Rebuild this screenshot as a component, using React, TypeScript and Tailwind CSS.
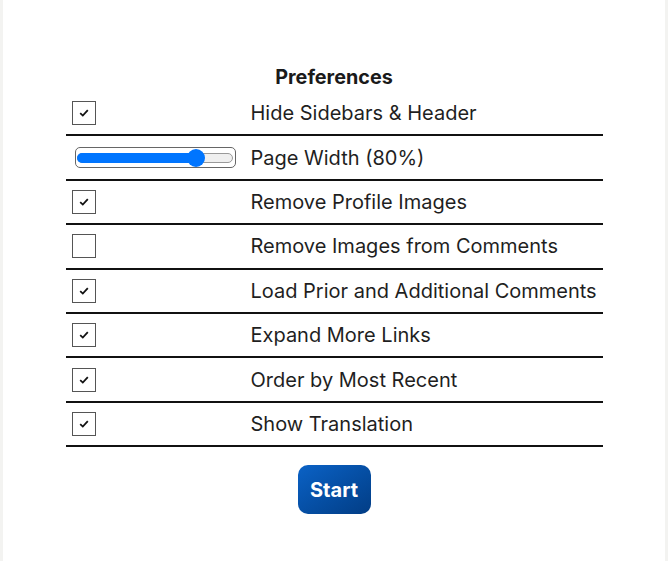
import React from "react";

const rows: { label: string; kind: "check" | "uncheck" | "slider" }[] = [
  { label: "Hide Sidebars & Header", kind: "check" },
  { label: "Page Width (80%)", kind: "slider" },
  { label: "Remove Profile Images", kind: "check" },
  { label: "Remove Images from Comments", kind: "uncheck" },
  { label: "Load Prior and Additional Comments", kind: "check" },
  { label: "Expand More Links", kind: "check" },
  { label: "Order by Most Recent", kind: "check" },
  { label: "Show Translation", kind: "check" },
];

function Box({ checked }: { checked: boolean }) {
  return (
    <div className="w-[24px] h-[24px] border border-[#555] bg-white flex items-center justify-center">
      {checked && (
        <svg width="10" height="8" viewBox="0 0 10 8">
          <path d="M1.2 4.2 L3.8 6.6 L8.8 1.2" fill="none" stroke="#111" strokeWidth="1.8" />
        </svg>
      )}
    </div>
  );
}

function Slider() {
  return (
    <div className="w-[161px] h-[21px] border-[1.5px] border-[#666] rounded-[5px] flex items-center px-[1.5px]">
      <div className="relative w-full h-[10px] rounded-full bg-[#efefef] border border-[#999]">
        <div className="absolute left-[-1px] top-[-1px] h-[10px] w-[121px] rounded-full bg-[#0075ff]" />
        <div className="absolute left-[109px] top-[-5px] w-[18px] h-[18px] rounded-full bg-[#0075ff]" />
      </div>
    </div>
  );
}

export default function App() {
  return (
    <div
      className="w-[668px] h-[561px] bg-[#f3f3f1] flex justify-center"
      style={{ fontFamily: "Inter, 'Noto Sans', sans-serif" }}
    >
      <div className="w-[662px] h-full bg-white flex flex-col items-center pt-[65px]">
        <div className="text-[19.8px] font-bold text-[#1a1a1a] leading-[24px] mb-[3px]">Preferences</div>
        <div className="w-[537px] flex flex-col">
          {rows.map((r) => (
            <div key={r.label} className="grid grid-cols-[178px_359px] h-[44.4px]">
              <div className="border-b-2 border-[#111] flex items-center pl-[6px] pr-[1px]">
                {r.kind === "slider" ? (
                  <div className="pl-[3px]">
                    <Slider />
                  </div>
                ) : (
                  <Box checked={r.kind === "check"} />
                )}
              </div>
              <div className="border-b-2 border-[#111] flex items-center pl-[7px] text-[20px] text-[#1f1f1f] whitespace-nowrap">
                {r.label}
              </div>
            </div>
          ))}
        </div>
        <button className="mt-[18px] w-[73px] h-[49px] rounded-[10px] bg-gradient-to-br from-[#0b62c6] to-[#023d85] text-white text-[20px] font-bold">
          Start
        </button>
      </div>
    </div>
  );
}
